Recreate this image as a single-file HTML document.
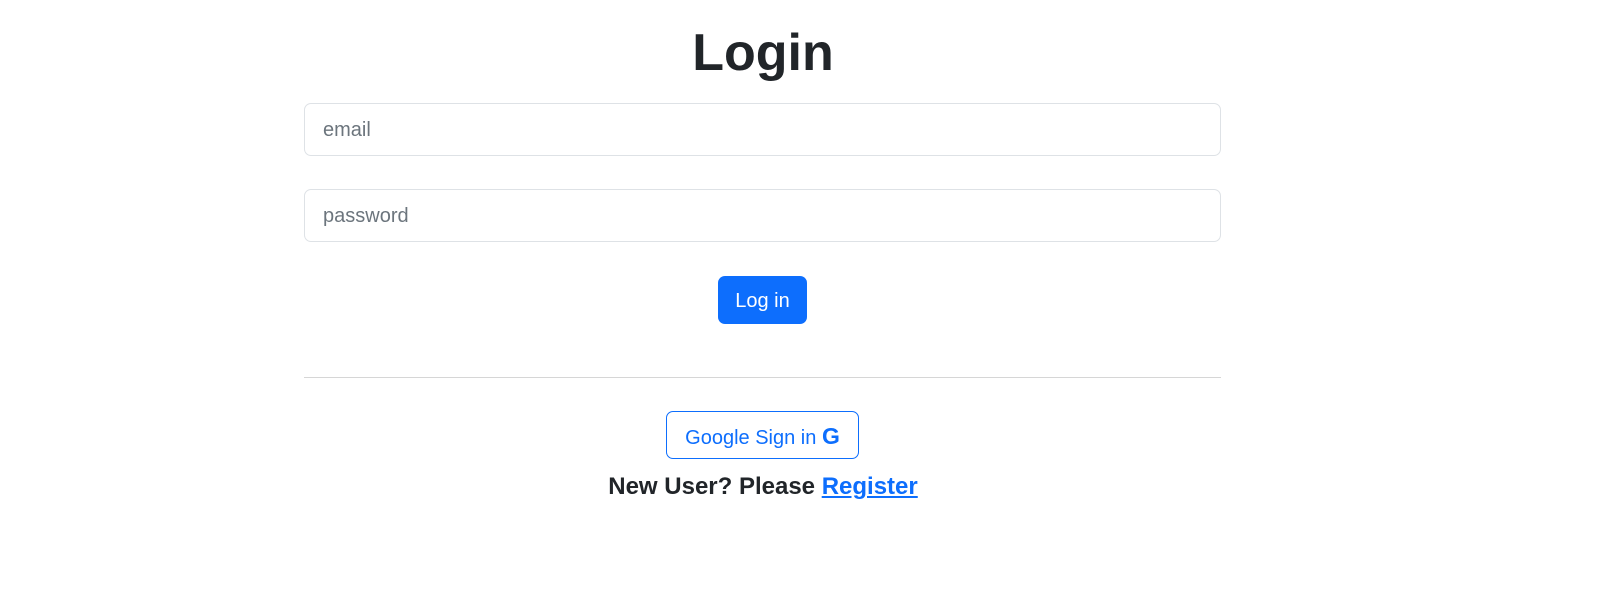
<!DOCTYPE html>
<html><head><style>
body{margin:0;width:1617px;height:603px;background:#fff;font-family:"Liberation Sans",sans-serif;position:relative;overflow:hidden}
h1{position:absolute;left:0;width:1526px;top:22px;margin:0;text-align:center;font-size:52px;font-weight:bold;color:#212529;line-height:62px}
.in{position:absolute;left:304px;width:915px;height:51px;border:1px solid #dee2e6;border-radius:7px;box-sizing:content-box}
.in span{position:absolute;left:18px;top:15px;font-size:20px;color:#6c757d}
.btn{position:absolute;left:718px;top:276px;width:89px;height:48px;background:#0d6efd;border-radius:7px;color:#fff;font-size:20px;text-align:center;line-height:50px}
.hr{position:absolute;left:304px;top:377px;width:917px;height:1px;background:#d6d6d6}
.g{position:absolute;left:666px;top:411px;width:191px;height:46px;border:1px solid #0d6efd;border-radius:7px;color:#0d6efd;font-size:20px;line-height:48px;text-align:center}
.t{position:absolute;left:0;width:1526px;top:473px;text-align:center;font-size:24px;font-weight:bold;color:#212529}
.t a{color:#0d6efd;text-decoration:underline}
</style></head><body>
<h1>Login</h1>
<div class="in" style="top:103px"><span>email</span></div>
<div class="in" style="top:189px"><span>password</span></div>
<div class="btn">Log in</div>
<div class="hr"></div>
<div class="g">Google Sign in <b style="font-size:23px">G</b></div>
<div class="t">New User? Please <a>Register</a></div>
</body></html>
